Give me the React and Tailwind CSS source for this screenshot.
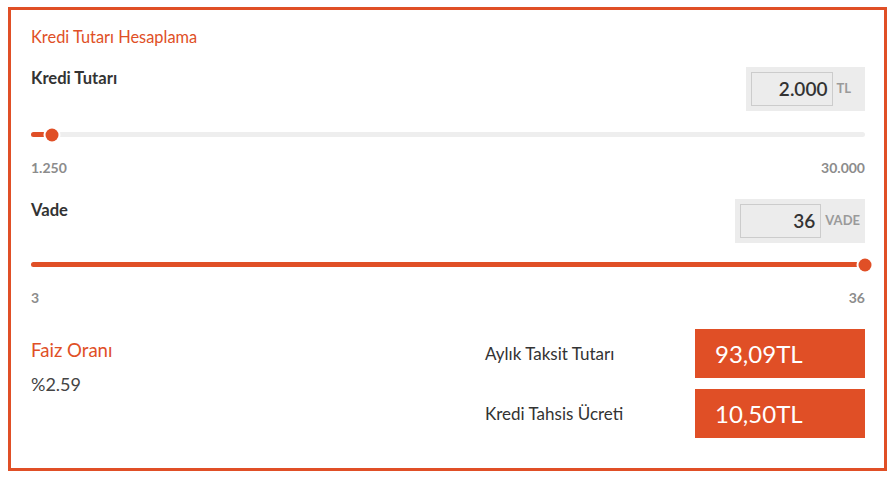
import React from 'react';

const Slider = ({ percent }) => (
  <div className="relative h-[5px] rounded-full bg-[#eeeeee]">
    <div className="absolute left-0 top-0 h-[5px] rounded-full bg-[#e04f26]" style={{ width: `${percent}%` }} />
    <div
      className="absolute top-1/2 h-[13px] w-[13px] -translate-x-1/2 -translate-y-1/2 rounded-full bg-[#e04f26] ring-2 ring-white"
      style={{ left: `${percent}%` }}
    />
  </div>
);

const ValueBox = ({ value, unit, inputWidth, unitClass }) => (
  <div className="flex items-center bg-[#ececec] p-[5px]">
    <div className={`${inputWidth} h-[34px] border border-[#cccccc] bg-[#ececec] flex items-center justify-end pr-[5px] text-[19px] font-semibold text-[#333333]`}>
      {value}
    </div>
    <span className={`${unitClass} text-[13px] font-bold text-[#9a9a9a]`}>{unit}</span>
  </div>
);

export default function App() {
  return (
    <div className="bg-white w-[895px] h-[480px] pt-[7px] pl-[8px]" style={{ fontFamily: 'Lato, "Noto Sans", sans-serif' }}>
      <div className="w-[879px] h-[464px] border-[3px] border-[#e04f26] pl-[20px] pr-[19px] pt-[17px]">
        <div className="text-[16.4px] leading-[20px] text-[#e04f26]">Kredi Tutarı Hesaplama</div>

        <div className="mt-[20px] flex justify-between items-start">
          <div className="text-[16.6px] font-bold leading-[22px] text-[#333333]">Kredi Tutarı</div>
          <ValueBox value="2.000" unit="TL" inputWidth="w-[82px]" unitClass="ml-[3px] mr-[9px]" />
        </div>

        <div className="mt-[21px]">
          <Slider percent={2.5} />
        </div>
        <div className="mt-[22px] flex justify-between text-[14px] font-bold leading-[18px] text-[#8c8c8c]">
          <span>1.250</span>
          <span>30.000</span>
        </div>

        <div className="mt-[22px] flex justify-between items-start">
          <div className="text-[16.6px] font-bold leading-[22px] text-[#333333]">Vade</div>
          <ValueBox value="36" unit="VADE" inputWidth="w-[81px]" unitClass="ml-[4px]" />
        </div>

        <div className="mt-[19px]">
          <Slider percent={100} />
        </div>
        <div className="mt-[22px] flex justify-between text-[14px] font-bold leading-[18px] text-[#8c8c8c]">
          <span>3</span>
          <span>36</span>
        </div>

        <div className="mt-[22px] flex justify-between">
          <div className="pt-[9px]">
            <div className="text-[18.6px] leading-[24px] text-[#e04f26]">Faiz Oranı</div>
            <div className="mt-[10px] text-[18px] leading-[24px] text-[#444444]">%2.59</div>
          </div>
          <div className="flex flex-col gap-[11px]">
            <div className="flex items-center">
              <span className="w-[210px] text-[17px] text-[#333333]">Aylık Taksit Tutarı</span>
              <div className="w-[170px] h-[49px] bg-[#e04f26] pl-[20px] flex items-center text-[24px] text-white">93,09TL</div>
            </div>
            <div className="flex items-center">
              <span className="w-[210px] text-[17px] text-[#333333]">Kredi Tahsis Ücreti</span>
              <div className="w-[170px] h-[49px] bg-[#e04f26] pl-[20px] flex items-center text-[24px] text-white">10,50TL</div>
            </div>
          </div>
        </div>
      </div>
    </div>
  );
}
